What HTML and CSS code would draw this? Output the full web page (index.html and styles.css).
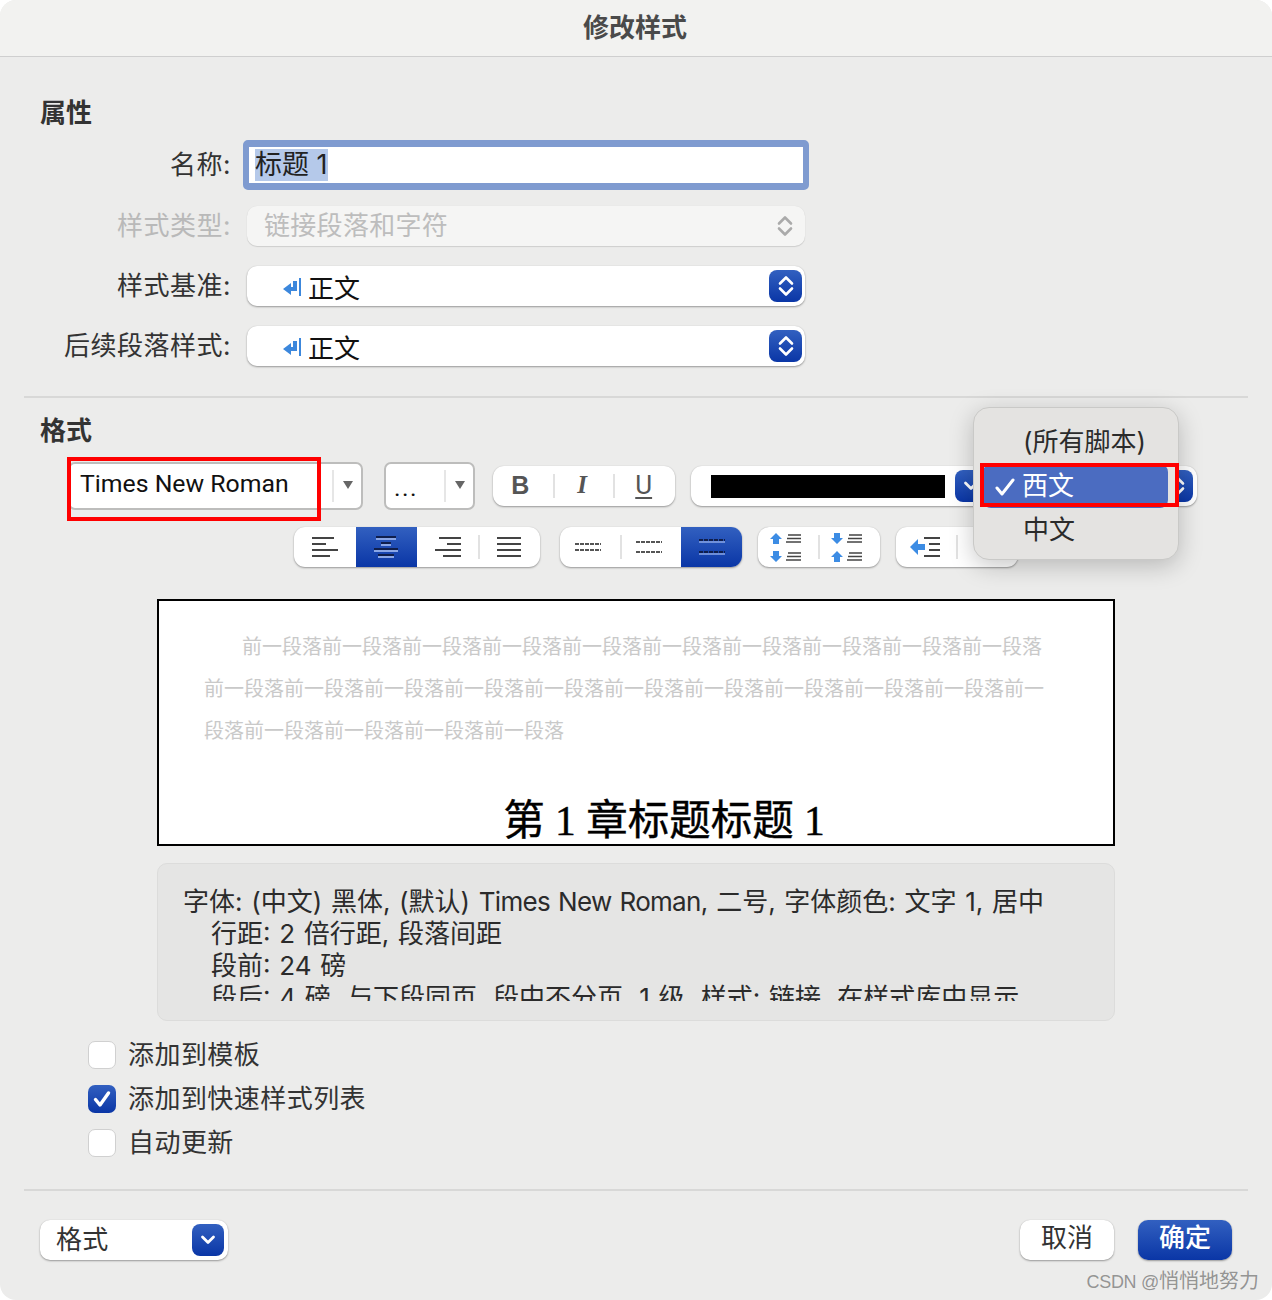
FILE: index.html
```html
<!DOCTYPE html>
<html lang="zh">
<head>
    <meta charset="UTF-8">
    <title>修改样式</title>
    <link rel="stylesheet" href="styles.css">
</head>
<body>
    <svg class="sprite" width="0" height="0">
        <symbol id="updown" viewBox="0 0 16 24"><path d="M2 9.500 8 3.500l6 6M2 14.500l6 6 6-6" fill="none" stroke="currentColor" stroke-width="2.600" stroke-linecap="round" stroke-linejoin="round"/></symbol>
        <symbol id="down" viewBox="0 0 16 10"><path d="M2.500 2 8 7.500 13.500 2" fill="none" stroke="currentColor" stroke-width="2.800" stroke-linecap="round" stroke-linejoin="round"/></symbol>
        <symbol id="caret" viewBox="0 0 10 8"><path d="M0 0h10L5 8z" fill="currentColor"/></symbol>
        <symbol id="para" viewBox="0 0 18 18"><path d="M17 0v18" stroke="#3c87dc" stroke-width="2" fill="none"/><path d="M10 3h4v10H8v4L0 11 8 5v4h2z" fill="#3c87dc"/></symbol>
        <symbol id="al-left" viewBox="0 0 26 20"><path d="M0 1h22M0 7h14M0 13h26M0 19h18" stroke="#444" stroke-width="2"/></symbol>
        <symbol id="al-right" viewBox="0 0 26 20"><path d="M4 1h22M12 7h14M0 13h26M8 19h18" stroke="#444" stroke-width="2"/></symbol>
        <symbol id="al-just" viewBox="0 0 26 20"><path d="M1 1h24M1 7h24M1 13h24M1 19h24" stroke="#444" stroke-width="2"/></symbol>
        <symbol id="al-center" viewBox="0 0 26 22"><path d="M3 1h20M8 7h10M1 13h24M5 19h16" stroke="#0f1e4c" stroke-width="2"/><path d="M3 3h20M8 9h10M1 15h24M5 21h16" stroke="#8aa6e6" stroke-width="2"/></symbol>
        <symbol id="dash-1" viewBox="0 0 26 16"><path d="M0 5h26M0 11h26" stroke="#555" stroke-width="2" stroke-dasharray="4 1"/></symbol>
        <symbol id="dash-2" viewBox="0 0 26 16"><path d="M0 3h26M0 13h26" stroke="#555" stroke-width="2" stroke-dasharray="4 1"/></symbol>
        <symbol id="dash-3" viewBox="0 0 26 16"><path d="M0 1h26M0 13h26" stroke="#0f1e4c" stroke-width="2" stroke-dasharray="4 1"/><path d="M0 3h26M0 15h26" stroke="#8aa6e6" stroke-width="1.500"/></symbol>
        <symbol id="sp-up" viewBox="0 0 12 11"><path d="M6 0 12 6H9v5H3V6H0z" fill="#3c8ce4"/></symbol>
        <symbol id="sp-down" viewBox="0 0 12 11"><path d="M6 11 0 5h3V0h6v5h3z" fill="#3c8ce4"/></symbol>
        <symbol id="bars" viewBox="0 0 15 9"><path d="M2 1h13M1 4.500h14M0 8h15" stroke="#444" stroke-width="1.600"/></symbol>
    </svg>

    <div class="dialog">
        <div class="titlebar">修改样式</div>

        <div class="section">
            <h2 class="heading heading-top">属性</h2>
            <div class="form-row name-row">
                <label class="form-label">名称:</label>
                <div class="name-field"><span class="selected">标题 1</span></div>
            </div>
            <div class="form-row">
                <label class="form-label disabled">样式类型:</label>
                <div class="select select-off">
                    <span class="select-text">链接段落和字符</span>
                    <svg class="updown-off"><use href="#updown"/></svg>
                </div>
            </div>
            <div class="form-row">
                <label class="form-label">样式基准:</label>
                <div class="select">
                    <svg class="para-icon"><use href="#para"/></svg><span class="para-text">正文</span>
                    <span class="blue-btn stepper"><svg><use href="#updown"/></svg></span>
                </div>
            </div>
            <div class="form-row">
                <label class="form-label">后续段落样式:</label>
                <div class="select">
                    <svg class="para-icon"><use href="#para"/></svg><span class="para-text">正文</span>
                    <span class="blue-btn stepper"><svg><use href="#updown"/></svg></span>
                </div>
            </div>
        </div>

        <div class="divider div-one"></div>

        <div class="section">
            <h2 class="heading">格式</h2>
            <div class="font-row">
                <div class="combo combo-font">
                    <span class="combo-value">Times New Roman</span>
                    <svg class="caret"><use href="#caret"/></svg>
                </div>
                <div class="combo combo-size">
                    <span class="combo-value">...</span>
                    <svg class="caret"><use href="#caret"/></svg>
                </div>
                <div class="group biu">
                    <span class="btn b-bold">B</span>
                    <span class="btn b-italic sep">I</span>
                    <span class="btn b-under sep">U</span>
                </div>
                <div class="group color-select">
                    <span class="swatch"></span>
                    <span class="blue-btn color-btn"><svg><use href="#down"/></svg></span>
                    <span class="blue-btn script-btn"><svg><use href="#updown"/></svg></span>
                </div>
            </div>

            <div class="tool-row">
                <div class="group g-align">
                    <span class="btn wide"><svg class="ic-al"><use href="#al-left"/></svg></span>
                    <span class="btn wide active"><svg class="ic-al"><use href="#al-center"/></svg></span>
                    <span class="btn wide"><svg class="ic-al"><use href="#al-right"/></svg></span>
                    <span class="btn wide sep"><svg class="ic-al"><use href="#al-just"/></svg></span>
                </div>
                <div class="group g-dash">
                    <span class="btn wide"><svg class="ic-dash"><use href="#dash-1"/></svg></span>
                    <span class="btn wide sep"><svg class="ic-dash"><use href="#dash-2"/></svg></span>
                    <span class="btn wide active"><svg class="ic-dash"><use href="#dash-3"/></svg></span>
                </div>
                <div class="group g-two">
                    <span class="btn wide space">
                        <span class="sp-line"><svg class="ic-arrow"><use href="#sp-up"/></svg><svg class="ic-bars"><use href="#bars"/></svg></span>
                        <span class="sp-line"><svg class="ic-arrow"><use href="#sp-down"/></svg><svg class="ic-bars"><use href="#bars"/></svg></span>
                    </span>
                    <span class="btn wide space sep">
                        <span class="sp-line"><svg class="ic-arrow"><use href="#sp-down"/></svg><svg class="ic-bars"><use href="#bars"/></svg></span>
                        <span class="sp-line"><svg class="ic-arrow"><use href="#sp-up"/></svg><svg class="ic-bars"><use href="#bars"/></svg></span>
                    </span>
                </div>
                <div class="group g-two">
                    <span class="btn wide">
                        <svg class="ic-indent" viewBox="0 0 30 20"><path d="M0 10 8 2v5h7v6H8v5z" fill="#3c8ce4"/><path d="M14 1h16M19 7h11M19 13h11M14 19h16" stroke="#444" stroke-width="2"/></svg>
                    </span>
                    <span class="btn wide sep">
                        <svg class="ic-indent" viewBox="0 0 30 20"><path d="M30 10l-8-8v5h-7v6h7v5z" fill="#3c8ce4"/></svg>
                    </span>
                </div>
            </div>

            <div class="preview">
                <p class="prev-text">前一段落前一段落前一段落前一段落前一段落前一段落前一段落前一段落前一段落前一段落前一段落前一段落前一段落前一段落前一段落前一段落前一段落前一段落前一段落前一段落前一段落前一段落前一段落前一段落前一段落</p>
                <div class="prev-title">第 1 章标题标题 1</div>
            </div>

            <div class="desc">
                <div class="desc-inner">
                    <div>字体: (中文) 黑体, (默认) <span class="latin-tight">Times New Roman,</span> 二号, 字体颜色: 文字 1, 居中</div>
                    <div class="desc-sub">行距: 2 倍行距, 段落间距</div>
                    <div class="desc-sub">段前: 24 磅</div>
                    <div class="desc-sub">段后: 4 磅, 与下段同页, 段中不分页, 1 级, 样式: 链接, 在样式库中显示</div>
                </div>
            </div>

            <div class="checks">
                <div class="check-row"><span class="box"></span>添加到模板</div>
                <div class="check-row">
                    <span class="box checked"><svg viewBox="0 0 28 28"><path d="M7.500 14.500l4.500 5.500 8.500-12" fill="none" stroke="#fff" stroke-width="3.400" stroke-linecap="round" stroke-linejoin="round"/></svg></span>添加到快速样式列表
                </div>
                <div class="check-row"><span class="box"></span>自动更新</div>
            </div>
        </div>

        <div class="divider div-two"></div>

        <div class="footer">
            <div class="select select-format">
                <span class="select-text">格式</span>
                <span class="blue-btn fmt-btn"><svg><use href="#down"/></svg></span>
            </div>
            <div class="actions">
                <span class="action">取消</span>
                <span class="action primary">确定</span>
            </div>
        </div>

        <div class="menu">
            <div class="menu-item">(所有脚本)</div>
            <div class="menu-item current">
                <svg class="menu-check" viewBox="0 0 20 20"><path d="M2 11l5 6L18 3" fill="none" stroke="#fff" stroke-width="3" stroke-linecap="round" stroke-linejoin="round"/></svg>西文
            </div>
            <div class="menu-item">中文</div>
        </div>

        <div class="mark mark-font"></div>
        <div class="mark mark-script"></div>
        <div class="watermark"><span class="mark-latin">CSDN @</span>悄悄地努力</div>
    </div>
</body>
</html>
```

FILE: styles.css
```css
* { box-sizing: border-box; }
body { margin: 0; background: #fff; font-family: Inter, "Noto Sans CJK SC", sans-serif; color: #2b2b2b; }
.sprite { position: absolute; }
svg { display: block; }

.dialog { position: relative; width: 1272px; height: 1300px; background: #ecECEB; border-radius: 16px; overflow: hidden; }
.titlebar { height: 57px; background: #f2f2f0; border-bottom: 1px solid #cfcfcf; text-align: center; font-size: 26px; font-weight: 700; line-height: 56px; color: #4a4a4a; padding-right: 2px; }

.heading { margin: 15px 0 0 40px; font-size: 26px; line-height: 36px; font-weight: 700; color: #333; }
.heading-top { margin-top: 38px; }

.form-row { display: flex; align-items: center; height: 40px; margin-top: 20px; }
.name-row { height: 50px; margin-top: 9px; margin-bottom: -4px; }
.form-label { width: 231px; margin-right: 16px; padding-bottom: 5px; text-align: right; font-size: 26px; letter-spacing: 0.5px; color: #333; }
.form-label.disabled { color: #b9b9b9; }

.name-field { width: 566px; height: 50px; margin-left: -4px; padding-left: 6px; background: #fff; border: solid #7f9bd0; border-width: 7px 6px; border-radius: 5px; font-size: 27px; line-height: 36px; color: #222; }
.selected { display: inline-block; height: 32px; margin-top: 1px; line-height: 32px; background: #b5c9ea; }

.select { position: relative; display: flex; align-items: center; width: 558px; height: 40px; background: #fff; border-radius: 10px; box-shadow: 0 1px 2px rgba(0,0,0,0.35), 0 0 1px rgba(0,0,0,0.15); font-size: 26px; }
.select-text { padding-bottom: 5px; letter-spacing: 0.3px; }
.select-off { padding-left: 17px; background: #f5f5f4; color: #bdbdbd; box-shadow: 0 1px 1px rgba(0,0,0,0.12), 0 0 1px rgba(0,0,0,0.1); }
.updown-off { position: absolute; right: 12px; top: 7px; width: 16px; height: 26px; color: #aaa; }
.para-icon { width: 18px; height: 18px; margin: 1px 7px 0 36px; }
.para-text { color: #111; }

.blue-btn { display: flex; align-items: center; justify-content: center; background: linear-gradient(#3260c0, #0a36a6); color: #fff; border-radius: 8px; }
.stepper { position: absolute; right: 3px; top: 4px; width: 33px; height: 32px; }
.stepper svg { width: 16px; height: 24px; }

.divider { height: 2px; margin: 0 24px; background: #d8d8d7; }
.div-one { margin-top: 30px; }
.div-two { margin-top: 32px; }

.font-row { display: flex; align-items: center; height: 48px; margin: 13px 0 0 68px; }
.combo { position: relative; height: 48px; background: #fff; border: 2px solid #bdbdbc; border-radius: 7px; }
.combo::after { content: ""; position: absolute; top: 6px; bottom: 6px; right: 27px; width: 2px; background: #e6e6e6; }
.combo-font { width: 295px; margin-right: 21px; }
.combo-size { width: 91px; margin-right: 18px; }
.combo-value { display: block; padding-left: 10px; font-family: Roboto, sans-serif; font-size: 24.800px; line-height: 40px; color: #111; }
.combo-size .combo-value { padding-left: 8px; line-height: 48px; letter-spacing: 1.500px; }
.caret { position: absolute; right: 8px; top: 17px; width: 10px; height: 8px; color: #666; }

.group { display: flex; height: 40px; background: #fff; border-radius: 11px; box-shadow: 0 1px 2px rgba(0,0,0,0.35), 0 0 1px rgba(0,0,0,0.15); overflow: hidden; }
.btn { position: relative; display: flex; align-items: center; justify-content: center; }
.sep::before { content: ""; position: absolute; left: -1px; top: 8px; bottom: 8px; width: 2px; background: #e2e2e2; }
.active { background: linear-gradient(#3260c0, #0a36a6); }

.biu { width: 182px; margin-right: 16px; }
.biu .btn { width: 61px; padding-bottom: 2px; font-size: 25px; color: #555; }
.biu .b-bold { padding-right: 6px; }
.biu .b-italic { padding-right: 4px; }
.biu .b-under { padding-right: 2px; font-size: 26px; }
.b-bold { font-family: "Liberation Sans", sans-serif; font-weight: 700; }
.b-italic { font-family: "Liberation Serif", serif; font-style: italic; font-weight: 700; }
.b-under { font-family: Roboto, sans-serif; text-decoration: underline; text-underline-offset: 3px; }

.color-select { position: relative; width: 506px; align-items: center; padding-left: 20px; }
.swatch { width: 234px; height: 23px; margin-top: 1px; background: #000; }
.color-btn { width: 32px; height: 32px; margin-left: 10px; }
.color-btn svg { width: 16px; height: 10px; }
.script-btn { width: 32px; height: 32px; margin-left: auto; margin-right: 4px; }
.script-btn svg { width: 16px; height: 24px; }

.tool-row { display: flex; justify-content: flex-end; gap: 16px; height: 40px; margin: 17px 254px 0 0; }
.g-align { width: 246px; margin-right: 4px; }
.g-dash { width: 182px; }
.g-two { width: 122px; }
.wide { flex: 1; }
.ic-al { width: 26px; height: 22px; }
.ic-dash { width: 26px; height: 16px; margin-right: 4px; }
.active .ic-dash { margin-right: 0; }
.space { flex-direction: column; gap: 7px; }
.sp-line { display: flex; align-items: center; gap: 4px; margin-right: 6px; }
.ic-arrow { width: 12px; height: 11px; }
.ic-bars { width: 15px; height: 9px; }
.ic-indent { width: 30px; height: 20px; margin-right: 4px; }

.preview { width: 958px; height: 247px; margin: 32px 0 0 157px; background: #fff; border: 2px solid #000; overflow: hidden; }
.prev-text { width: 842px; margin: 25px 0 0 45px; font-size: 20px; line-height: 42px; color: #c9c9c9; text-indent: 38px; }
.prev-title { margin-top: 41px; padding-left: 56px; text-align: center; font-family: "Liberation Serif", "Noto Sans CJK SC", serif; font-size: 41.500px; line-height: 56px; color: #000; -webkit-text-stroke: 0.4px #000; }

.desc { width: 958px; height: 158px; margin: 17px 0 0 157px; padding: 22px 25px 0; background: #e5e5e4; border: 1px solid #dcdcdb; border-radius: 10px; }
.desc-inner { height: 115px; overflow: hidden; font-size: 26px; line-height: 32px; word-spacing: 1.400px; color: #2b2b2b; white-space: nowrap; }
.desc-sub { padding-left: 28px; }
.latin-tight { letter-spacing: -0.700px; }

.checks { margin: 20px 0 0 88px; }
.check-row { display: flex; align-items: flex-start; height: 28px; margin-bottom: 16px; font-size: 26px; line-height: 28px; letter-spacing: 0.450px; color: #333; }
.check-row:last-child { margin-bottom: 0; }
.box { width: 28px; height: 28px; margin-right: 12px; background: #fff; border: 1px solid #d0d0d0; border-radius: 7px; }
.box.checked { background: linear-gradient(#3260c0, #0a36a6); border: 0; }

.footer { display: flex; justify-content: space-between; align-items: center; height: 40px; margin: 29px 40px 0; }
.select-format { width: 188px; padding-left: 16px; color: #333; }
.fmt-btn { position: absolute; right: 4px; top: 4px; width: 32px; height: 32px; }
.fmt-btn svg { width: 16px; height: 10px; }
.actions { display: flex; gap: 24px; }
.action { width: 94px; height: 40px; text-align: center; background: #fff; border-radius: 10px; box-shadow: 0 1px 2px rgba(0,0,0,0.35), 0 0 1px rgba(0,0,0,0.15); font-size: 26px; line-height: 36px; color: #333; }
.action.primary { background: linear-gradient(#3260c0, #0a36a6); color: #fff; font-weight: 500; }

.menu { position: absolute; left: 973px; top: 407px; width: 206px; height: 153px; padding-top: 12px; background: #e4e3e1; border: 1px solid #c9c9c7; border-radius: 16px; box-shadow: 0 6px 24px rgba(0,0,0,0.22); }
.menu-item { display: flex; align-items: center; height: 44px; padding: 0 0 5px 49px; font-size: 26px; color: #2b2b2b; }
.menu-item.current { margin: 0 10px 0 9px; padding-left: 39px; position: relative; background: #4b6cc1; color: #fff; border-radius: 8px; }
.menu-check { position: absolute; left: 12px; top: 13px; width: 20px; height: 20px; }

.mark { position: absolute; border: 4px solid #f00; }
.mark-font { left: 67px; top: 457px; width: 254px; height: 64px; }
.mark-script { left: 980px; top: 463px; width: 199px; height: 44px; }

.watermark { position: absolute; right: 13px; top: 1268px; font-family: "Liberation Sans", "Noto Sans CJK SC", sans-serif; font-size: 20px; line-height: 26px; color: rgba(90,90,90,0.62); }
.mark-latin { font-size: 18px; letter-spacing: -0.300px; }
```
